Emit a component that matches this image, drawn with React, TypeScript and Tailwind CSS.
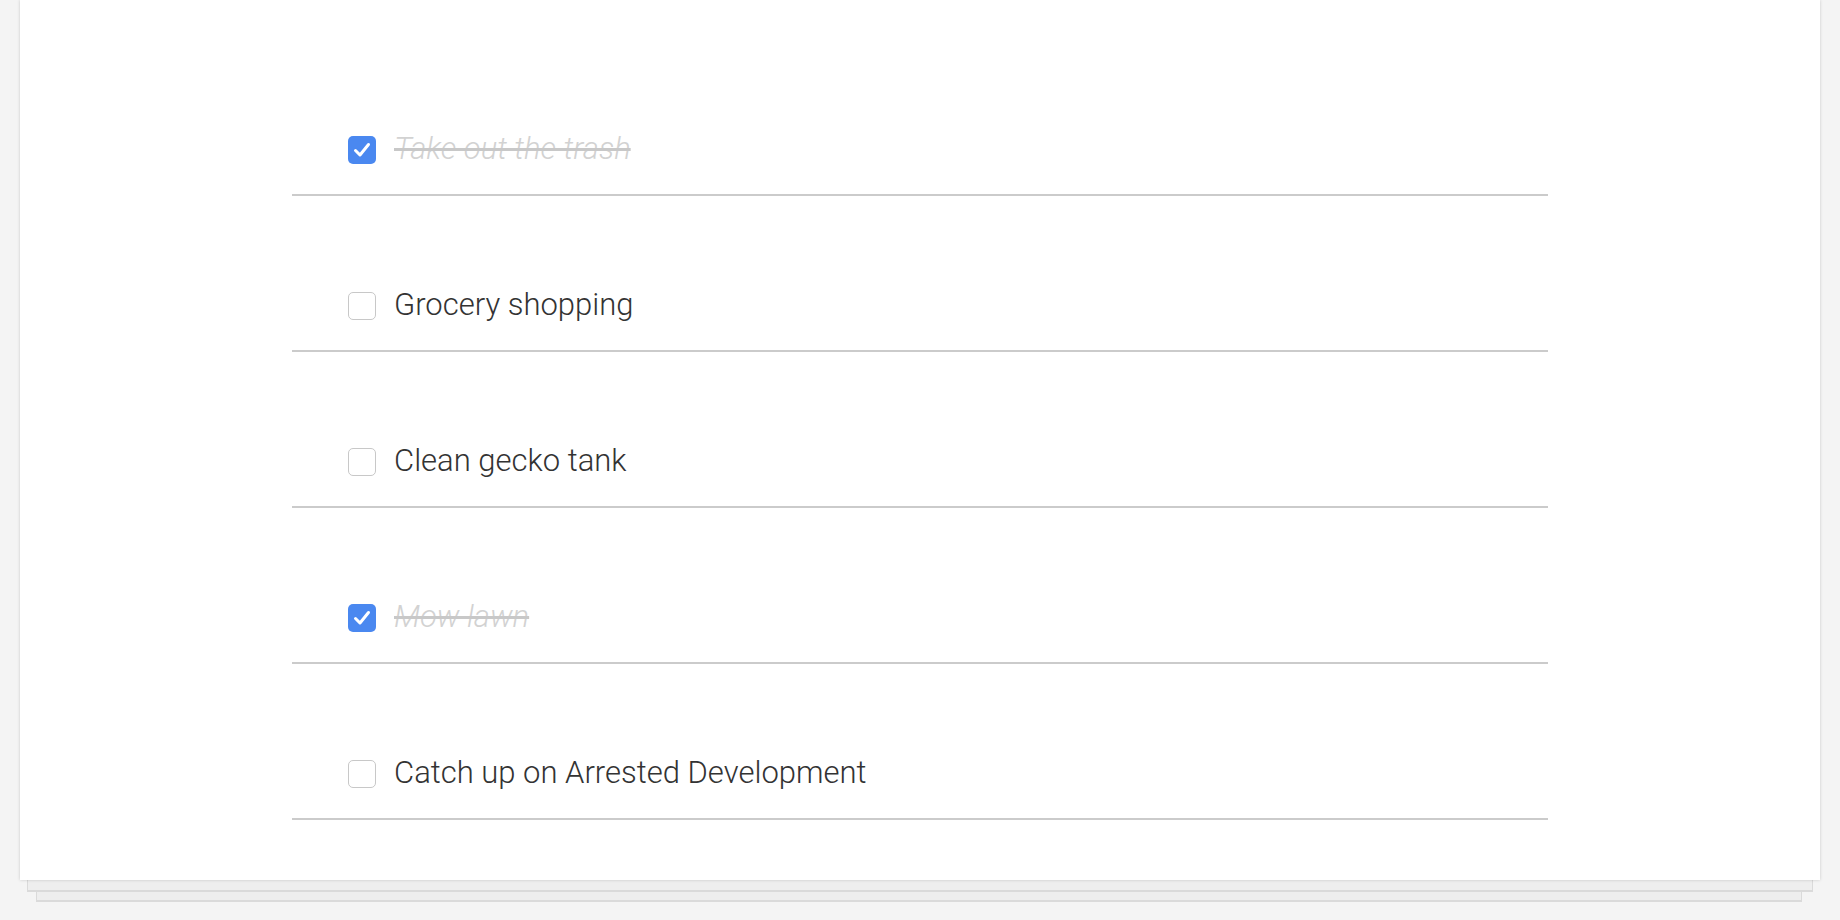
import React from "react";

const todos = [
  { text: "Take out the trash", done: true },
  { text: "Grocery shopping", done: false },
  { text: "Clean gecko tank", done: false },
  { text: "Mow lawn", done: true },
  { text: "Catch up on Arrested Development", done: false },
];

function Check({ done }: { done: boolean }) {
  if (done) {
    return (
      <div className="w-[28px] h-[28px] rounded-[5px] bg-[#4a88f0] flex items-center justify-center shrink-0">
        <svg width="28" height="28" viewBox="0 0 28 28">
          <path d="M7.5 14.5 L12 19 L20.5 8.5" fill="none" stroke="#fff" strokeWidth="3" strokeLinecap="round" strokeLinejoin="round" />
        </svg>
      </div>
    );
  }
  return <div className="w-[28px] h-[28px] rounded-[5px] border border-[#c8c8c8] bg-white shrink-0" />;
}

export default function App() {
  return (
    <div className="min-h-screen bg-[#f4f4f4] overflow-hidden" style={{ fontFamily: "Roboto, 'Liberation Sans', sans-serif" }}>
      <div className="mx-[20px]">
        <div className="bg-white h-[880px] pt-[40px] shadow-[0_0_3px_rgba(0,0,0,0.18)] relative z-10">
          <div className="ml-[272px] w-[1256px]">
            {todos.map((t, i) => (
              <div key={i} className="h-[156px] border-b-2 border-[#cbcbcb] pt-[96px] pl-[56px]">
                <div className="flex items-center gap-[18px] h-[28px]">
                  <Check done={t.done} />
                  <span
                    className={
                      t.done
                        ? "text-[31px] leading-[40px] -mt-[2px] font-light italic text-[#d2d2d2] line-through decoration-[#c8c8c8]"
                        : "text-[31px] leading-[40px] -mt-[2px] font-light text-[#333333]"
                    }
                  >
                    {t.text}
                  </span>
                </div>
              </div>
            ))}
          </div>
        </div>
        <div className="mx-[7px] h-[12px] bg-[#eeeeee] border-b-2 border-x border-[#dadada] relative z-[5]" />
        <div className="ml-[16px] mr-[18px] h-[10px] bg-[#eeeeee] border-b-2 border-x border-[#dadada]" />
      </div>
    </div>
  );
}
